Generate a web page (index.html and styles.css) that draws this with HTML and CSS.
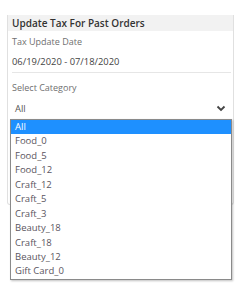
FILE: index.html
```html
<!DOCTYPE html>
<html>
    <head>
        <title>Update Tax</title>
        <link rel="stylesheet" href="styles.css">
    </head>
    <body>
        <div class="panel">
            <div class="panel_head">Update Tax For Past Orders</div>
            <div class="panel_body">
                <div class="label label_first">Tax Update Date</div>
                <div class="dates">06/19/2020 - 07/18/2020</div>
                <div class="label">Select Category</div>
                <div class="select">
                    <span>All</span>
                    <svg class="chevron" width="10" height="7" viewBox="0 0 10 7">
                        <polyline points="1.5,1.5 5,5 8.5,1.5" fill="none" stroke="#444" stroke-width="1.8"/>
                    </svg>
                </div>
            </div>
        </div>

        <ul class="options">
            <li class="selected">All</li>
            <li>Food_0</li>
            <li>Food_5</li>
            <li>Food_12</li>
            <li>Craft_12</li>
            <li>Craft_5</li>
            <li>Craft_3</li>
            <li>Beauty_18</li>
            <li>Craft_18</li>
            <li>Beauty_12</li>
            <li>Gift Card_0</li>
        </ul>
    </body>
</html>
```

FILE: styles.css
```css
body
{
    margin:0;
    background:#ffffff;
    font-family:"Open Sans", "Liberation Sans", sans-serif;
    position:relative;
    height:288px;
    overflow:hidden;
}

.panel
{
    margin:15px 7px 0 7px;
    height:190px;
    border:1px solid #e0e0e0;
    border-top:none;
    border-radius:0 0 3px 3px;
    box-sizing:border-box;
}

.panel_head
{
    height:16px;
    line-height:16px;
    background:#f2f2f2;
    color:#333333;
    font-size:10px;
    font-weight:600;
    padding-left:4px;
}

.panel_body
{
    padding:0 2px 0 4px;
}

.label
{
    font-size:9px;
    color:#6f6f6f;
    height:20px;
    line-height:20px;
}

.label_first
{
    margin-top:1px;
}

.dates
{
    font-size:9.4px;
    color:#444444;
    height:20px;
    line-height:20px;
    border-bottom:1px solid #e6e6e6;
    margin-bottom:5px;
}

.select
{
    height:20px;
    display:flex;
    align-items:center;
    justify-content:space-between;
    padding:0 5px 0 3px;
    font-size:9.4px;
    color:#555555;
}

.chevron
{
    display:block;
}

.options
{
    position:absolute;
    top:119px;
    left:10px;
    width:222px;
    height:161px;
    margin:0;
    padding:0;
    list-style:none;
    background:#ffffff;
    border:1px solid #8a8a8a;
    box-sizing:border-box;
    box-shadow:1px 1px 2px rgba(0,0,0,0.25);
}

.options li
{
    height:14.45px;
    line-height:14.45px;
    padding-left:4px;
    font-size:9.5px;
    color:#5a5560;
}

.options li.selected
{
    background:#1e90ff;
    color:#ffffff;
}
```
